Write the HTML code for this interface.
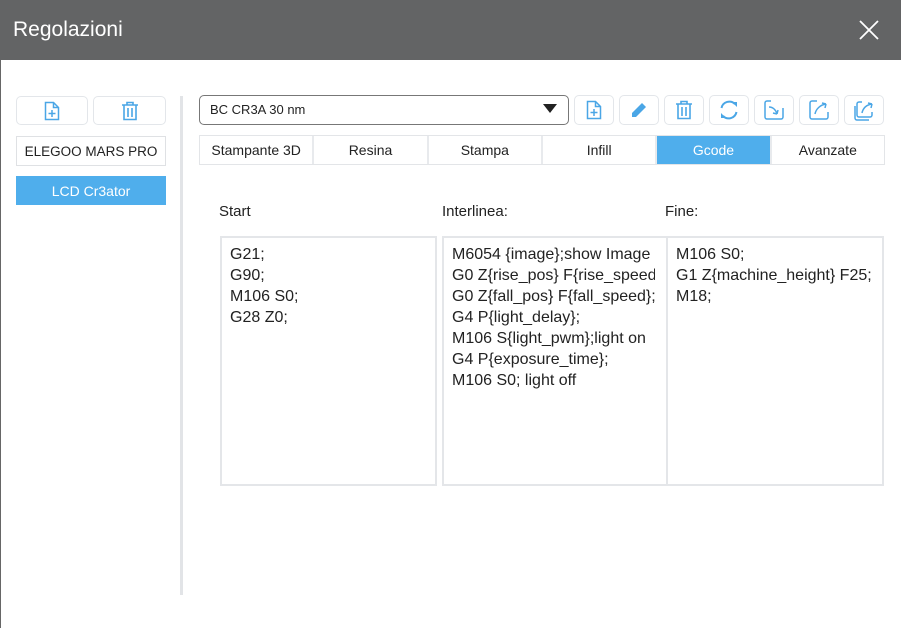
<!DOCTYPE html>
<html><head><meta charset="utf-8"><style>
*{box-sizing:border-box;margin:0;padding:0}
body{width:901px;height:628px;background:#fff;font-family:"Liberation Sans",sans-serif;position:relative;overflow:hidden;color:#222}
.abs{position:absolute}
.title{left:0;top:0;width:901px;height:60px;background:#636465;color:#fff;font-size:21px;line-height:60px;padding-left:13px}
.lb{left:0;top:60px;width:1px;height:568px;background:#666}
.btn{position:absolute;border:1px solid #e3e6ea;border-radius:5px;background:#fff;display:flex;align-items:center;justify-content:center}
.box{position:absolute;border:1px solid #dfe1e4;background:#fff;font-size:14px;display:flex;align-items:center;justify-content:center;white-space:nowrap}
.tabs{left:199px;top:135px;width:686px;height:30px;border:1px solid #e3e5e8;display:flex}
.tab{flex:1;border-right:2px solid #e8eaed;font-size:14px;display:flex;align-items:center;justify-content:center;color:#222}
.tab:last-child{border-right:none}
.tab.on{background:#4faeec;color:#fff}
.lab{font-size:15px;top:203px}
.ta{border:2px solid #e4e6e9;font-size:16px;line-height:21px;padding:6px 8px;white-space:pre;overflow:hidden;color:#222}
.clip{overflow:hidden;white-space:pre}
svg{display:block}
</style></head><body>
<div class="abs title">Regolazioni</div>
<svg class="abs" style="left:859px;top:20px" width="20" height="20" viewBox="0 0 20 20"><path d="M1 1L19 19M19 1L1 19" stroke="#fff" stroke-width="1.8"/></svg>
<div class="abs lb"></div>

<div class="btn" style="left:16px;top:96px;width:72px;height:29px"><svg width="16" height="20" viewBox="0 0 16 20"><path d="M1.5 1.5h8l5 5v12h-13z M9.5 1.5v5h5 M8 9v7 M4.5 12.5h7" fill="none" stroke="#4aa6e6" stroke-width="1.5"/></svg></div>
<div class="btn" style="left:93px;top:96px;width:73px;height:29px"><svg width="18" height="20" viewBox="0 0 18 20"><path d="M1 4h16 M6 4V1.5h6V4 M3 4v14.5h12V4 M7 7v9 M11 7v9" fill="none" stroke="#4aa6e6" stroke-width="1.6"/></svg></div>
<div class="box" style="left:16px;top:136px;width:150px;height:30px;font-size:13.5px">ELEGOO MARS PRO</div>
<div class="box" style="left:16px;top:176px;width:150px;height:29px;background:#4faeec;border-color:#4faeec;color:#fff">LCD Cr3ator</div>
<div class="abs" style="left:180px;top:96px;width:3px;height:499px;background:#e2e4e7"></div>

<div class="abs" style="left:199px;top:95px;width:370px;height:30px;border:1px solid #777;border-radius:5px;font-size:13px;line-height:28px;padding-left:10px">BC CR3A 30 nm</div>
<svg class="abs" style="left:543px;top:104px" width="14" height="10"><path d="M0 0h14L7 9z" fill="#222"/></svg>

<div class="btn" style="left:574px;top:95px;width:40px;height:30px"><svg width="16" height="20" viewBox="0 0 16 20"><path d="M1.5 1.5h8l5 5v12h-13z M9.5 1.5v5h5 M8 9v7 M4.5 12.5h7" fill="none" stroke="#4aa6e6" stroke-width="1.5"/></svg></div>
<div class="btn" style="left:619px;top:95px;width:40px;height:30px"><svg width="20" height="20" viewBox="0 0 20 20"><path d="M3 13L13 3l4 4L7 17H3z" fill="#4aa6e6"/></svg></div>
<div class="btn" style="left:664px;top:95px;width:40px;height:30px"><svg width="18" height="20" viewBox="0 0 18 20"><path d="M1 4h16 M6 4V1.5h6V4 M3 4v14.5h12V4 M7 7v9 M11 7v9" fill="none" stroke="#4aa6e6" stroke-width="1.6"/></svg></div>
<div class="btn" style="left:709px;top:95px;width:40px;height:30px"><svg width="22" height="22" viewBox="0 0 22 22"><path d="M3.5 9A8 8 0 0 1 17 5 M18.5 13A8 8 0 0 1 5 17" fill="none" stroke="#4aa6e6" stroke-width="2"/><path d="M14 3h5v5z M8 19H3v-5z" fill="#4aa6e6"/></svg></div>
<div class="btn" style="left:754px;top:95px;width:40px;height:30px"><svg width="22" height="22" viewBox="0 0 22 22"><path d="M8 2H4a2 2 0 0 0-2 2v14a2 2 0 0 0 2 2h14a2 2 0 0 0 2-2V9 M6 8c4 0 7 3 8 7 M14 15l-4-1 M14 15l1-4" fill="none" stroke="#4aa6e6" stroke-width="1.5"/></svg></div>
<div class="btn" style="left:799px;top:95px;width:40px;height:30px"><svg width="22" height="22" viewBox="0 0 22 22"><path d="M9 2H4a2 2 0 0 0-2 2v14a2 2 0 0 0 2 2h14a2 2 0 0 0 2-2v-5 M7 15c1-5 5-9 11-10 M18 5l-4-1 M18 5l-1 4" fill="none" stroke="#4aa6e6" stroke-width="1.5"/></svg></div>
<div class="btn" style="left:844px;top:95px;width:40px;height:30px"><svg width="22" height="22" viewBox="0 0 22 22"><path d="M9 3H6a2 2 0 0 0-2 2v11a2 2 0 0 0 2 2h11a2 2 0 0 0 2-2v-3 M2 7v12a2 2 0 0 0 2 2h12 M9 14c1-5 4-8 10-9 M19 5l-4-1 M19 5l-1 4" fill="none" stroke="#4aa6e6" stroke-width="1.5"/></svg></div>

<div class="abs tabs">
<div class="tab">Stampante 3D</div><div class="tab">Resina</div><div class="tab">Stampa</div><div class="tab">Infill</div><div class="tab on">Gcode</div><div class="tab">Avanzate</div>
</div>

<div class="abs lab" style="left:219px">Start</div>
<div class="abs lab" style="left:442px">Interlinea:</div>
<div class="abs lab" style="left:665px">Fine:</div>

<div class="abs ta" style="left:220px;top:236px;width:217px;height:250px">G21;
G90;
M106 S0;
G28 Z0;</div>
<div class="abs ta" style="left:442px;top:236px;width:226px;height:250px"><div class="clip" style="width:203px">M6054 {image};show Image
G0 Z{rise_pos} F{rise_speed};
G0 Z{fall_pos} F{fall_speed};
G4 P{light_delay};
M106 S{light_pwm};light on
G4 P{exposure_time};
M106 S0; light off</div></div>
<div class="abs ta" style="left:666px;top:236px;width:218px;height:250px">M106 S0;
G1 Z{machine_height} F25;
M18;</div>
</body></html>
